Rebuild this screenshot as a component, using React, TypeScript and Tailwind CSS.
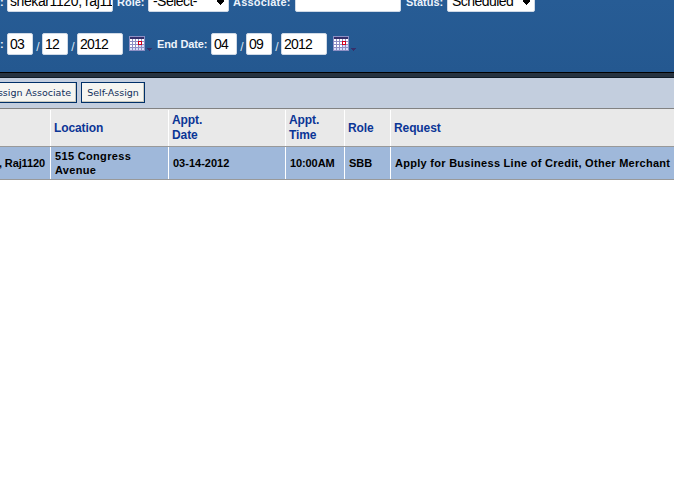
import React from "react";

type TextProps = { children?: React.ReactNode; className?: string };

function Label({ children, className = "" }: TextProps) {
  return (
    <span className={`block h-[22px] shrink-0 text-[11px] font-bold whitespace-pre text-[#edf3fb] ${className}`}>
      {children}
    </span>
  );
}

function Field({ children, className = "" }: TextProps) {
  return (
    <div className={`h-[22px] shrink-0 overflow-hidden rounded-[2px] border border-[#cfd9e6] bg-white pl-[2px] text-[14px] leading-[21px] whitespace-pre text-black ${className}`}>
      {children}
    </div>
  );
}

function Arrow() {
  return (
    <svg className="mt-[9px] mr-[3px] h-[6px] w-[9px] shrink-0" viewBox="0 0 9 6" shapeRendering="crispEdges">
      <path d="M1 0h7v2h-1v1h-1v1h-1v1h-1v-1h-1v-1h-1v-1h-1z" fill="#000" />
    </svg>
  );
}

function Select({ children, className = "" }: TextProps) {
  return (
    <div className={`flex h-[22px] shrink-0 justify-between overflow-hidden rounded-[2px] border border-[#cfd9e6] bg-white pl-[4px] text-[14px] leading-[21px] tracking-[-0.55px] whitespace-pre text-black ${className}`}>
      <span>{children}</span>
      <Arrow />
    </div>
  );
}

function Slash() {
  return <span className="w-[9px] shrink-0 pt-[3px] text-center text-[12px] leading-[22px] text-[#dce8f5]">/</span>;
}

function Calendar() {
  return (
    <svg className="mt-[3px] h-[17px] w-[24px] shrink-0" viewBox="0 0 24 17" shapeRendering="crispEdges">
      <path d="M0 0h16v15H0z" fill="#8d8fc4" />
      <path d="M1 1h14v2H1z" fill="#36306b" />
      <path d="M1 3h2v2H1zM4 3h2v2H4zM7 3h2v2H7zM10 3h2v2h-2zM13 3h2v2h-2zM1 6h2v2H1zM4 6h2v2H4zM7 6h2v2H7zM13 6h2v2h-2zM1 9h2v2H1zM4 9h2v2H4zM7 9h2v2H7z" fill="#fff" />
      <path d="M10 9h2v2h-2zM13 9h2v2h-2zM1 12h2v2H1zM4 12h2v2H4zM7 12h2v2H7zM10 12h2v2h-2zM13 12h2v2h-2z" fill="#d6defa" />
      <path d="M9 5h4v4H9z" fill="#d3001c" />
      <path d="M10 6h2v2h-2z" fill="#fff" />
      <path d="M18 12h5v1h-1v1h-1v1h-1v-1h-1v-1h-1z" fill="#36306b" />
    </svg>
  );
}

function DateInput({ month, day, year }: { month: string; day: string; year: string }) {
  return (
    <div className="flex tracking-[-0.8px]">
      <Field className="w-[26px]">{month}</Field>
      <Slash />
      <Field className="w-[26px]">{day}</Field>
      <Slash />
      <Field className="mr-[6px] w-[46px]">{year}</Field>
      <Calendar />
    </div>
  );
}

function Action({ children, className = "" }: TextProps) {
  return (
    <button className={`flex h-[21px] shrink-0 items-center border border-[#003068] bg-[#f5f5f1] font-['DejaVu_Sans',sans-serif] text-[9.5px] leading-[19px] whitespace-nowrap text-[#102f5c] shadow-[inset_-1px_-1px_0_#c9c9be] ${className}`}>
      {children}
    </button>
  );
}

const columns = "grid grid-cols-[50px_118px_117px_59px_46px_1fr]";

function Head({ children, className = "" }: TextProps) {
  return <div className={`flex items-center border-l border-white pl-[3px] ${className}`}>{children}</div>;
}

function Cell({ children, className = "" }: TextProps) {
  return <div className={`flex items-center border-l border-white pl-[4px] ${className}`}>{children}</div>;
}

export default function App() {
  return (
    <div className="h-[477px] w-[674px] overflow-hidden bg-white font-['Liberation_Sans',Arial,sans-serif]">
      <header className="h-[72px] bg-gradient-to-b from-[#275c95] to-[#245890]">
        <div className="flex h-[12px] items-end overflow-hidden leading-[24px]">
          <Label className="w-[7px]">:</Label>
          <Field className="w-[106px] tracking-[-0.4px]">shekar1120, raj11</Field>
          <Label className="ml-[4px] w-[31px]">Role:</Label>
          <Select className="w-[81px]">-Select-</Select>
          <Label className="ml-[4px] w-[62px] tracking-[0.2px]">Associate:</Label>
          <Field className="w-[106px]" />
          <Label className="ml-[5px] w-[41px]">Status:</Label>
          <Select className="w-[88px]">Scheduled</Select>
        </div>
        <div className="mt-[21px] flex leading-[22px]">
          <Label className="w-[7px]">:</Label>
          <DateInput month="03" day="12" year="2012" />
          <Label className="ml-[4px] w-[54px] tracking-[-0.1px]">End Date:</Label>
          <DateInput month="04" day="09" year="2012" />
        </div>
      </header>
      <div className="h-[6px] border-t border-b border-t-black border-b-[#101c28] bg-[#26323f]" />
      <div className="flex h-[30px] gap-[4px] overflow-hidden bg-[#c3cede] pt-[4px]">
        <Action className="w-[77px] justify-end border-l-0 pr-[5px]">Assign Associate</Action>
        <Action className="w-[64px] justify-center">Self-Assign</Action>
      </div>
      <div className={`${columns} h-[39px] border-t border-b border-t-[#828282] border-b-[#999] bg-[#e9e9e9] pt-px text-[12px] leading-[15px] font-bold tracking-[-0.1px] text-[#0b3596]`}>
        <div />
        <Head>Location</Head>
        <Head>Appt.<br />Date</Head>
        <Head>Appt.<br />Time</Head>
        <Head>Role</Head>
        <Head>Request</Head>
      </div>
      <div className={`${columns} h-[33px] border-b border-[#999] bg-[#9fb8da] text-[11px] leading-[14px] font-bold text-black`}>
        <div className="flex items-center justify-end pr-[5px] whitespace-nowrap tracking-[-0.12px]">, Raj1120</div>
        <Cell className="tracking-[0.33px]">515 Congress<br />Avenue</Cell>
        <Cell>03-14-2012</Cell>
        <Cell className="tracking-[-0.1px]">10:00AM</Cell>
        <Cell>SBB</Cell>
        <Cell className="tracking-[0.28px] whitespace-nowrap">Apply for Business Line of Credit, Other Merchant</Cell>
      </div>
    </div>
  );
}
